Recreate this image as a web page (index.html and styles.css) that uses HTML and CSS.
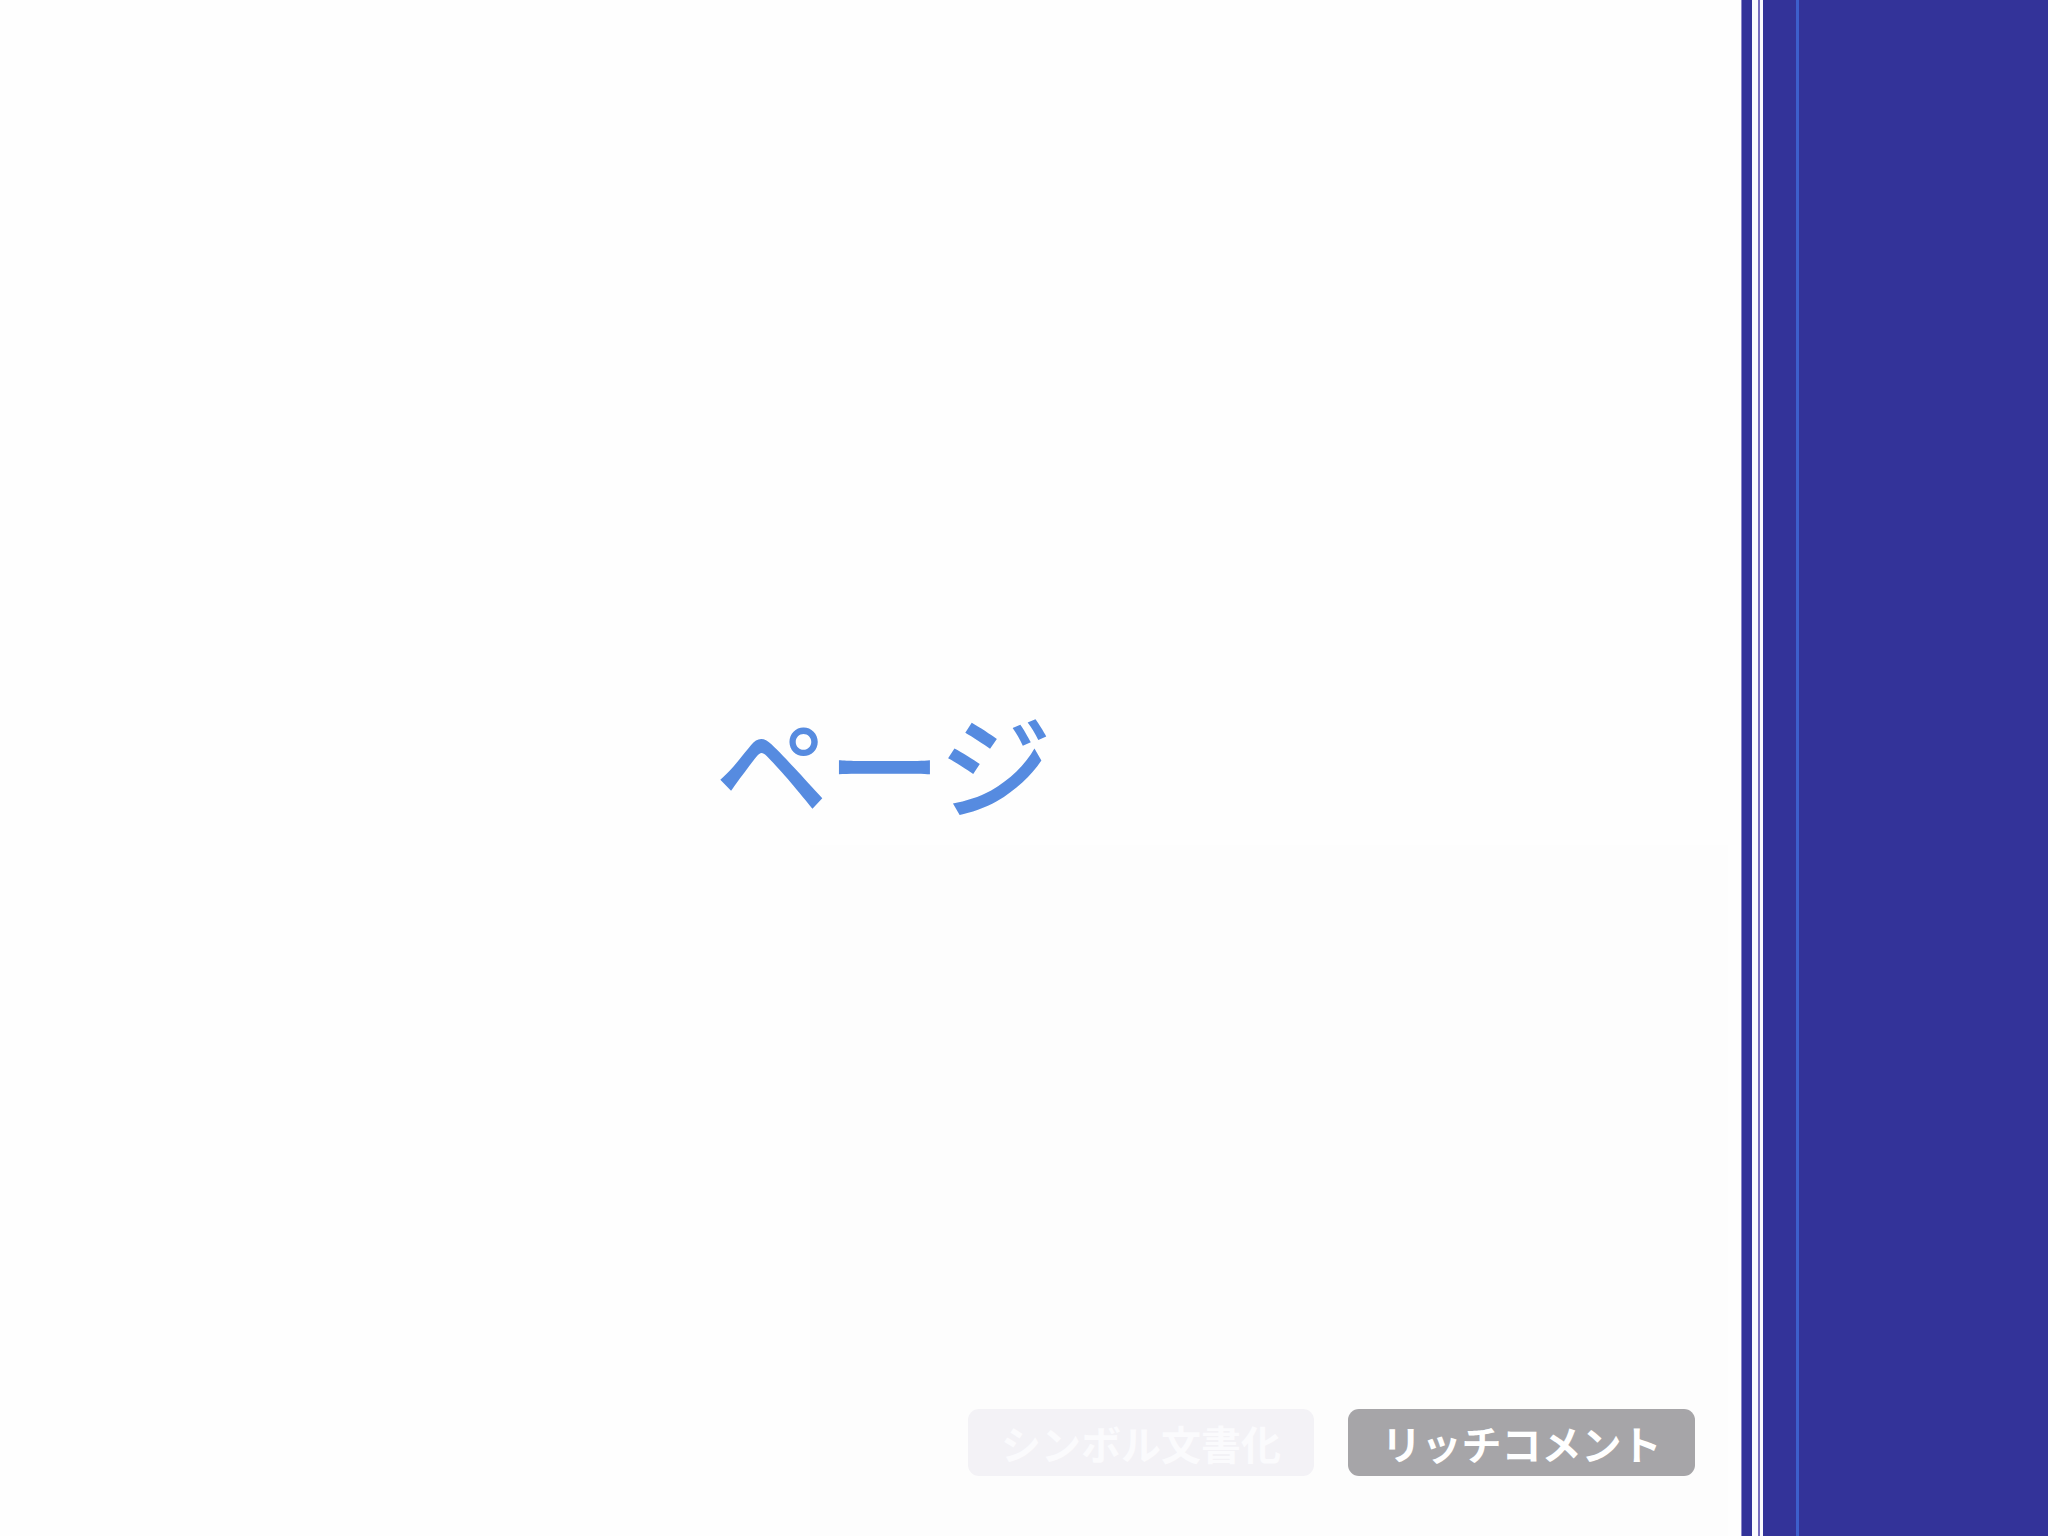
FILE: index.html
```html
<!DOCTYPE html>
<html lang="ja">
<head>
<meta charset="utf-8">
<title>ページ</title>
<link rel="stylesheet" href="styles.css">
</head>
<body>
<div class="app">
  <main class="main">
    <div class="stage">
      <h1 class="title">ページ</h1>
    </div>
    <div class="actions">
      <button class="btn btn-light" type="button">シンボル文書化</button>
      <button class="btn btn-gray" type="button">リッチコメント</button>
    </div>
  </main>
  <aside class="side">
    <div class="s-edge"></div>
    <div class="s-dark1"></div>
    <div class="s-white1"></div>
    <div class="s-purple"></div>
    <div class="s-white2"></div>
    <div class="s-dark2"></div>
    <div class="s-bright"></div>
    <div class="s-dark3"></div>
  </aside>
</div>
</body>
</html>
```

FILE: styles.css
```css
html, body {
  margin: 0;
  padding: 0;
  width: 2048px;
  height: 1536px;
  overflow: hidden;
  background: #fefefe;
}

.app {
  display: flex;
  width: 2048px;
  height: 1536px;
}

.main {
  flex: 0 0 1741px;
  display: flex;
  flex-direction: column;
  background-color: #fefefe;
  background-image: linear-gradient(#fdfdfd, #fdfdfd);
  background-repeat: no-repeat;
  background-position: 810px 845px;
  background-size: 918px 691px;
  font-family: "Noto Sans CJK JP", "Noto Sans", sans-serif;
}

.stage {
  flex: 1;
  display: flex;
  align-items: center;
  justify-content: center;
  padding-left: 26px;
  padding-top: 114px;
}

.title {
  margin: 0;
  font-size: 113px;
  font-weight: 500;
  line-height: 1;
  color: #568be0;
}

.actions {
  display: flex;
  justify-content: flex-end;
  gap: 34px;
  padding-right: 46px;
  padding-bottom: 60px;
}

.btn {
  width: 347px;
  height: 67px;
  border: 0;
  border-radius: 11px;
  padding: 0;
  display: flex;
  align-items: center;
  justify-content: center;
  font-family: "Noto Sans CJK JP", "Noto Sans", sans-serif;
  font-size: 40px;
  font-weight: 700;
  line-height: 1;
  white-space: nowrap;
  cursor: pointer;
}

.btn-light {
  width: 346px;
  background: #f3f2f6;
  color: #fbfbfd;
}

.btn-gray {
  background: #a6a5a8;
  color: #ffffff;
}

.side {
  flex: 0 0 307px;
  display: flex;
  background: #333399;
}

.s-edge { flex: 0 0 1px; background: #8a86c8; }
.s-dark1 { flex: 0 0 10px; background: #333399; }
.s-white1 { flex: 0 0 6px; background: #fbfbff; }
.s-purple { flex: 0 0 2px; background: #7a70bf; }
.s-white2 { flex: 0 0 3px; background: #fbfbff; }
.s-dark2 { flex: 0 0 33px; background: #333399; }
.s-bright { flex: 0 0 3px; background: #3d5fcc; }
.s-dark3 { flex: 1; background: #333399; }
```
